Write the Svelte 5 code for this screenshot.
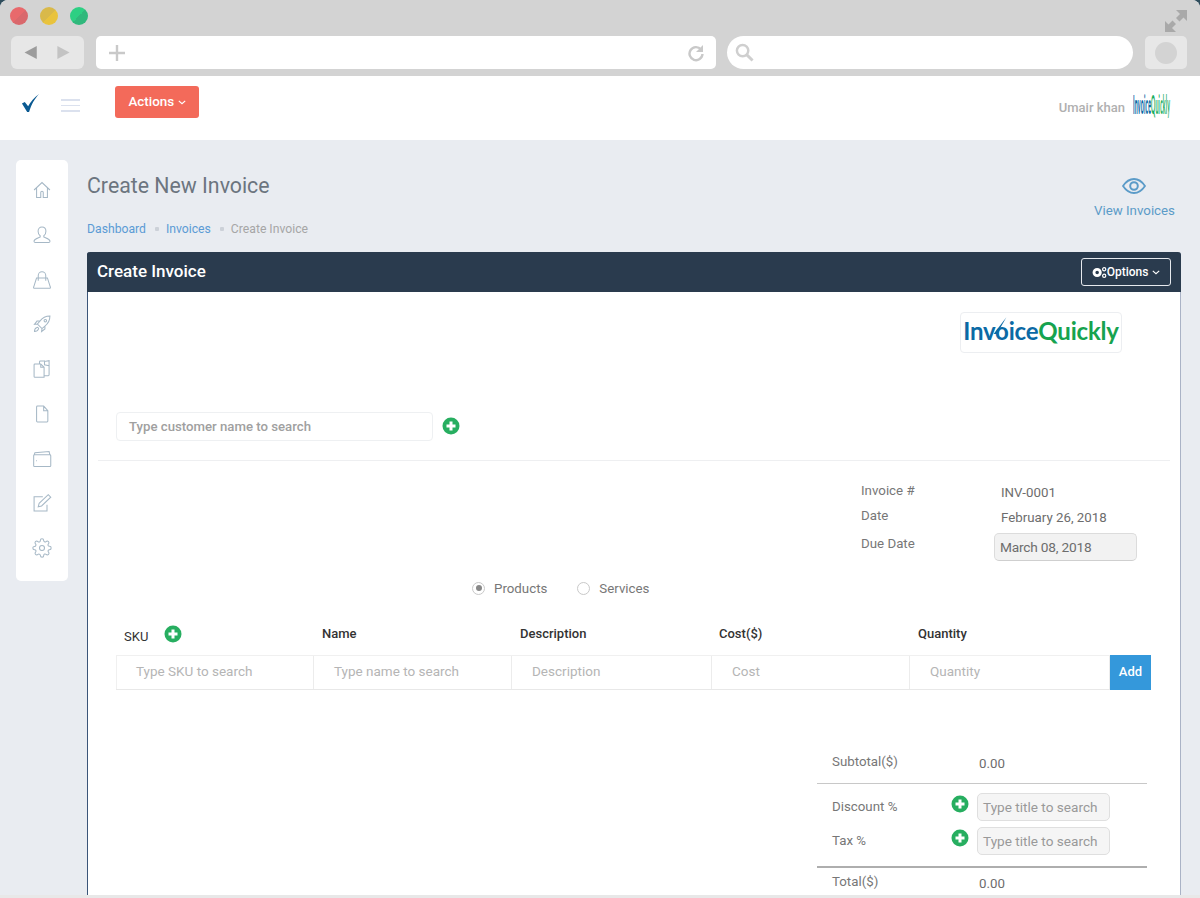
<script>
  const nav = [
    { label: 'Home', d: 'M2.5 12 12 3l9.5 9M5.5 10v11h5v-6a1.5 1.5 0 0 1 3 0v6h5V10' },
    { label: 'Profile', d: 'M12 2.5c-3 0-4.7 2.2-4.7 5 0 2.4 1 4.300 2.500 5.400v1.500c-1.800 1-6.800 2-7.300 4.600-.2 1 .3 2 1.500 2h16c1.200 0 1.700-1 1.500-2-.5-2.600-5.500-3.600-7.300-4.600v-1.500c1.500-1.100 2.500-3 2.500-5.400 0-2.800-1.700-5-4.700-5Z' },
    { label: 'Shop', d: 'M5.500 9.500 2 20.500a1 1 0 0 0 1 1.500h18a1 1 0 0 0 1-1.500l-3.500-11ZM7.500 13V6.500a4.500 4.500 0 0 1 9 0V13' },
    { label: 'Launch', d: 'M21.500 2.500c-5 0-9 2-12 6l-3 3.500 5.500 5.500 3.500-3c4-3 6-7 6-12ZM6.500 12l-3.500.5 3-4h3.500M12 17.500l-.5 3.500 4-3v-3.500M5.500 16.500c-1.500.5-2.500 2.500-2.500 4.500 2 0 4-1 4.500-2.500a1.400 1.400 0 0 0-2-2ZM16 6.500a1.500 1.500 0 1 0 .01 0' },
    { label: 'Copies', d: 'M3.500 6h7l4 4v12h-11a1 1 0 0 1-1-1V7a1 1 0 0 1 1-1ZM10.500 6v4h4M9 6V3.500a1 1 0 0 1 1-1h5l0 .5 5.500-1v17a1 1 0 0 1-1 1H14.500M15 2.500l0 4.500 5.500 1' },
    { label: 'File', d: 'M6.500 2.500h7.500l5 5.500v12.500a1 1 0 0 1-1 1H6.500a1 1 0 0 1-1-1V3.500a1 1 0 0 1 1-1ZM14 2.500V8h5' },
    { label: 'Folder', d: 'M2.500 7h19a1 1 0 0 1 1 1v12a1 1 0 0 1-1 1H3a1 1 0 0 1-1-1V8ZM2.500 7l1-2.500 17-1.500 1 4M5 14h1' },
    { label: 'Edit', d: 'M18 14v7.500H2.500V4.500H13M8.500 12.500 19.500 2l3 3-11 10.500-4 1Z' },
    { label: 'Settings', d: 'M19.4 15a1.65 1.65 0 0 0 .33 1.82l.06.06a2 2 0 0 1 0 2.83 2 2 0 0 1-2.83 0l-.06-.06a1.65 1.65 0 0 0-1.82-.33 1.65 1.65 0 0 0-1 1.51V21a2 2 0 0 1-2 2 2 2 0 0 1-2-2v-.09A1.65 1.65 0 0 0 9 19.4a1.65 1.65 0 0 0-1.82.33l-.06.06a2 2 0 0 1-2.83 0 2 2 0 0 1 0-2.83l.06-.06a1.65 1.65 0 0 0 .33-1.82 1.65 1.65 0 0 0-1.51-1H3a2 2 0 0 1-2-2 2 2 0 0 1 2-2h.09A1.65 1.65 0 0 0 4.600 9a1.65 1.65 0 0 0-.33-1.82l-.06-.06a2 2 0 0 1 0-2.83 2 2 0 0 1 2.83 0l.06.06a1.65 1.65 0 0 0 1.820.33H9a1.65 1.65 0 0 0 1-1.51V3a2 2 0 0 1 2-2 2 2 0 0 1 2 2v.09a1.65 1.65 0 0 0 1 1.51 1.65 1.65 0 0 0 1.82-.33l.06-.06a2 2 0 0 1 2.83 0 2 2 0 0 1 0 2.83l-.06.06a1.65 1.65 0 0 0-.33 1.82V9a1.65 1.65 0 0 0 1.51 1H21a2 2 0 0 1 2 2 2 2 0 0 1-2 2h-.09a1.65 1.65 0 0 0-1.51 1ZM15 12a3 3 0 1 1-6 0 3 3 0 0 1 6 0Z' }
  ];
  const columns = [
    { label: 'SKU', placeholder: 'Type SKU to search', width: 198 },
    { label: 'Name', placeholder: 'Type name to search', width: 198 },
    { label: 'Description', placeholder: 'Description', width: 200 },
    { label: 'Cost($)', placeholder: 'Cost', width: 198 },
    { label: 'Quantity', placeholder: 'Quantity', width: 200 }
  ];
</script>

{#snippet plus()}
  <svg class="plus" viewBox="0 0 18 18" aria-hidden="true">
    <circle cx="9" cy="9" r="8.500" fill="#27ae60" />
    <path d="M9 4.500v9M4.500 9h9" stroke="#fff" stroke-width="3" />
  </svg>
{/snippet}

<div class="page">
  <div class="chrome">
    <div class="lights">
      <span class="light red"></span>
      <span class="light yellow"></span>
      <span class="light green"></span>
      <svg class="expand" viewBox="0 0 22 22" aria-hidden="true">
        <path d="M11 0h11v11l-3.500-3.500-4 4-3.500-3.500 4-4ZM0 22V11l3.500 3.500 4-4 3.500 3.500-4 4L11 22Z" fill="#a9a9a9" />
      </svg>
    </div>
    <div class="toolbar">
      <div class="nav-buttons">
        <svg viewBox="0 0 50 16" aria-hidden="true">
          <path d="M0 8 13 1v14Z" fill="#9c9c9c" />
          <path d="M48 8 35 1v14Z" fill="#c3c3c3" />
        </svg>
      </div>
      <div class="address">
        <svg viewBox="0 0 16 16" aria-hidden="true">
          <path d="M8 0v16M0 8h16" stroke="#c9c9c9" stroke-width="2.400" />
        </svg>
        <svg class="reload" viewBox="0 0 18 18" aria-hidden="true">
          <path d="M14 5.500A6.500 6.500 0 1 0 15.500 10" fill="none" stroke="#c9c9c9" stroke-width="2.400" />
          <path d="M16 1v7h-7Z" fill="#c9c9c9" />
        </svg>
      </div>
      <div class="search">
        <svg viewBox="0 0 20 20" aria-hidden="true">
          <circle cx="8" cy="8" r="6" fill="none" stroke="#cfcfcf" stroke-width="2.600" />
          <path d="m12.500 12.500 6 6" stroke="#cfcfcf" stroke-width="3" />
        </svg>
      </div>
      <div class="profile-button"><span></span></div>
    </div>
  </div>

  <header class="app-header">
    <svg class="check" viewBox="0 0 20 20" aria-hidden="true">
      <path d="M1 10.500 4 9l3.500 4.500C10 8.500 14 4 19 .5 14.500 5.500 11 11 8.500 19.500H6.500Z" fill="#0b5a92" />
    </svg>
    <div class="burger"><span></span><span></span><span></span></div>
    <button class="actions">Actions <svg viewBox="0 0 10 6" aria-hidden="true"><path d="m1 1 4 3.500L9 1" fill="none" stroke="#fff" stroke-width="1.500" /></svg></button>
    <div class="user">
      <span class="uname">Umair khan</span>
      <div class="avatar"><span class="mini"><b>Invoice</b><i>Quickly</i></span></div>
    </div>
  </header>

  <div class="workspace">
    <aside class="sidebar">
      {#each nav as item}
        <svg viewBox="0 0 24 24" role="img" aria-label={item.label}><path d={item.d} /></svg>
      {/each}
    </aside>

    <main class="content">
      <div class="page-head">
        <div>
          <h1>Create New Invoice</h1>
          <nav class="crumbs">
            <a href="#a">Dashboard</a><span class="dot"></span><a href="#b">Invoices</a><span class="dot"></span><span>Create Invoice</span>
          </nav>
        </div>
        <a class="view" href="#c">
          <svg viewBox="0 0 24 16" aria-hidden="true">
            <path d="M1 8c3-4.500 7-7 11-7s8 2.500 11 7c-3 4.500-7 7-11 7S4 12.500 1 8Z" fill="none" stroke="#5b9bc8" stroke-width="1.800" />
            <circle cx="12" cy="8" r="3.800" fill="none" stroke="#5b9bc8" stroke-width="2" />
          </svg>
          View Invoices
        </a>
      </div>

      <section class="panel">
        <div class="panel-head">
          <h2>Create Invoice</h2>
          <button class="options">
            <svg viewBox="0 0 16 13" aria-hidden="true">
              <circle cx="5.500" cy="6.500" r="3.400" fill="none" stroke="#fff" stroke-width="3" />
              <circle cx="13" cy="3" r="1.700" fill="none" stroke="#fff" stroke-width="1.300" />
              <circle cx="13" cy="10" r="1.700" fill="none" stroke="#fff" stroke-width="1.300" />
            </svg>Options
            <svg class="chev" viewBox="0 0 10 6" aria-hidden="true"><path d="m1 1 4 3.500L9 1" fill="none" stroke="#fff" stroke-width="1.400" /></svg>
          </button>
        </div>

        <div class="panel-body">
          <div class="logo-row">
            <div class="logo">
              <span class="inv">Invoice</span><span class="qk">Quickly</span>
              <svg class="tick" viewBox="0 0 20 24" aria-hidden="true"><path d="M2 22 18 1 6 22Z" fill="#0b6aa5" /></svg>
            </div>
          </div>

          <div class="customer">
            <div class="field customer-field">Type customer name to search</div>
            {@render plus()}
          </div>
          <hr />

          <div class="meta">
            <div class="meta-row r1"><span>Invoice #</span><span class="val">INV-0001</span></div>
            <div class="meta-row r2"><span>Date</span><span class="val">February 26, 2018</span></div>
            <div class="meta-row r3"><span>Due Date</span><span class="date">March 08, 2018</span></div>
          </div>

          <div class="radios">
            <span class="radio on"></span><span class="rlabel first">Products</span>
            <span class="radio"></span><span class="rlabel">Services</span>
          </div>

          <div class="item-table">
            <div class="heads">
              {#each columns as c, i}
                <div class="head" style="width:{c.width}px">
                  {#if i === 0}
                    <span class="sku">{c.label}</span>{@render plus()}
                  {:else}
                    {c.label}
                  {/if}
                </div>
              {/each}
            </div>
            <div class="cells">
              {#each columns as c}
                <div class="cell" style="width:{c.width}px">{c.placeholder}</div>
              {/each}
              <button class="add">Add</button>
            </div>
          </div>

          <div class="totals">
            <div class="t-row sub"><span class="t-label">Subtotal($)</span><span class="t-val">0.00</span></div>
            <div class="t-inputs">
              <div class="t-row"><span class="t-label">Discount %</span>{@render plus()}<span class="t-field">Type title to search</span></div>
              <div class="t-row"><span class="t-label">Tax %</span>{@render plus()}<span class="t-field">Type title to search</span></div>
            </div>
            <div class="t-row total"><span class="t-label">Total($)</span><span class="t-val">0.00</span></div>
          </div>
        </div>
      </section>
    </main>
  </div>
  <div class="strip"></div>
</div>

<style>
  :global(body) {
    margin: 0;
    background: #2f4d5c;
    font-family: Roboto, "Liberation Sans", sans-serif;
  }
  .page {
    height: 898px;
    width: 1200px;
    overflow: hidden;
    display: flex;
    flex-direction: column;
    background: #e9ecf1;
    border-radius: 8px 8px 0 0;
  }
  .chrome {
    height: 76px;
    flex: none;
    background: #d3d3d3;
    box-sizing: border-box;
    padding: 7px 11px 0;
  }
  .lights {
    display: flex;
    gap: 12px;
    height: 29px;
    align-items: flex-start;
    margin-left: -1px;
  }
  .light { width: 18px; height: 18px; border-radius: 50%; }
  .red { background: linear-gradient(135deg, #e8696c 50%, #d9686c 50%); }
  .yellow { background: linear-gradient(135deg, #d9b94a 50%, #e9c33d 50%); }
  .green { background: linear-gradient(135deg, #2dcf83 50%, #30b87c 50%); }
  .expand { width: 22px; height: 22px; margin-left: auto; margin-top: 3px; margin-right: 2px; }
  .toolbar { display: flex; height: 33px; }
  .nav-buttons {
    width: 73px;
    background: #e7e7e7;
    border-radius: 6px;
    display: flex;
    align-items: center;
    justify-content: center;
  }
  .nav-buttons svg { width: 48px; height: 15px; }
  .address {
    width: 620px;
    margin-left: 12px;
    background: #fff;
    border-radius: 5px;
    display: flex;
    align-items: center;
    justify-content: space-between;
    padding: 0 11px 0 13px;
    box-sizing: border-box;
  }
  .address svg { width: 16px; height: 16px; }
  .address .reload { width: 18px; height: 18px; }
  .search {
    width: 406px;
    margin-left: 11px;
    background: #fff;
    border-radius: 17px;
    display: flex;
    align-items: center;
    padding-left: 8px;
    box-sizing: border-box;
  }
  .search svg { width: 19px; height: 19px; }
  .profile-button {
    width: 42px;
    margin-left: 12px;
    background: #e7e7e7;
    border-radius: 5px;
    display: flex;
    align-items: center;
    justify-content: center;
  }
  .profile-button span { width: 22px; height: 22px; border-radius: 50%; background: #d3d3d3; }

  .app-header {
    height: 64px;
    flex: none;
    background: #fff;
    display: flex;
    align-items: flex-start;
    position: relative;
  }
  .check { width: 19px; height: 20px; margin: 17px 0 0 21px; }
  .burger { margin: 23px 0 0 21px; width: 19px; display: flex; flex-direction: column; gap: 4px; }
  .burger span { height: 1.500px; background: #dbe1ee; }
  .actions {
    margin: 10px 0 0 35px;
    width: 84px;
    height: 32px;
    border: 0;
    border-radius: 3px;
    background: #f36a5a;
    color: #fff;
    font: 500 13.400px Roboto, sans-serif;
    padding: 0 0 2px;
    white-space: nowrap;
  }
  .actions svg { width: 8px; height: 5px; vertical-align: 1px; }
  .user {
    margin-left: auto;
    margin-right: 28px;
    display: flex;
    align-items: center;
    height: 30px;
    margin-top: 13px;
    font-size: 13px;
    font-weight: 500;
    color: #b0b0b0;
  }
  .uname { margin-top: 6px; }
  .avatar { width: 39px; height: 28px; margin-left: 8px; position: relative; }
  .mini {
    position: absolute;
    left: 0;
    top: 0;
    font: 700 26px/28px "Lato", sans-serif;
    transform: scaleX(.2);
    transform-origin: left center;
    white-space: nowrap;
    letter-spacing: 1px;
  }
  .mini b { color: #0b6aa5; }
  .mini i { color: #1bae5f; font-style: normal; font-weight: 700; }

  .workspace { flex: 1; min-height: 0; display: flex; align-items: flex-start; padding: 20px 19px 0 16px; }
  .sidebar {
    width: 52px;
    height: 421px;
    flex: none;
    background: #fff;
    border-radius: 5px;
    box-sizing: border-box;
    padding-top: 20px;
    display: flex;
    flex-direction: column;
    align-items: center;
    gap: 24.750px;
  }
  .sidebar svg { width: 20px; height: 20px; fill: none; stroke: #a6b8c6; stroke-width: 1.250; flex: none; }

  .content { flex: 1; margin-left: 19px; min-width: 0; }
  .page-head { display: flex; justify-content: space-between; height: 92px; }
  h1 { margin: 14px 0 0; font-size: 21.300px; line-height: 24px; font-weight: 400; color: #6c757f; }
  .crumbs { display: flex; align-items: center; margin-top: 24px; font-size: 12.200px; line-height: 14px; color: #a6a6a6; }
  .crumbs a { color: #5b9bd5; text-decoration: none; }
  .dot { width: 4px; height: 4px; background: #ccd1d8; margin: 0 7px 0 9px; border-radius: 1px; }
  .view {
    margin: 18px 6px 0 0;
    display: flex;
    flex-direction: column;
    align-items: center;
    font-size: 13.300px;
    color: #5b9bc8;
    text-decoration: none;
    gap: 9px;
  }
  .view svg { width: 24px; height: 16px; }

  .panel { border: 1px solid #3b5579; border-right-color: #aab3c6; border-top: 0; background: #fff; height: 700px; border-radius: 3px 3px 0 0; }
  .panel-head {
    height: 40px;
    margin: 0 -1px;
    background: #2a3b4e;
    border-radius: 3px 3px 0 0;
    display: flex;
    align-items: center;
    justify-content: space-between;
    padding: 0 10px;
  }
  h2 { margin: -3px 0 0; color: #fff; font-size: 17px; font-weight: 500; }
  .options {
    width: 90px;
    height: 28px;
    border: 1px solid #e6e9ee;
    border-radius: 3px;
    background: transparent;
    color: #fff;
    font: 500 12px Roboto, sans-serif;
    padding: 0;
    display: flex;
    align-items: center;
    justify-content: center;
    gap: 0;
  }
  .options svg { width: 15px; height: 13px; }
  .options .chev { width: 8px; height: 5px; margin-left: 4px; }

  .panel-body { font-size: 13.300px; color: #777; }
  .logo-row { height: 120px; display: flex; justify-content: flex-end; padding: 20px 58px 0 0; box-sizing: border-box; }
  .logo {
    width: 162px;
    height: 41px;
    box-sizing: border-box;
    border: 1px solid #eceef1;
    border-radius: 4px;
    display: flex;
    align-items: center;
    justify-content: center;
    font: 700 24px/36px "Lato", sans-serif;
    letter-spacing: -.2px;
    padding-bottom: 4px;
    position: relative;
  }
  .inv { color: #0b6aa5; }
  .qk { color: #16a34f; }
  .tick { position: absolute; left: 31px; top: 3px; width: 16px; height: 20px; }

  .customer { display: flex; align-items: center; height: 29px; margin-left: 28px; }
  .customer-field {
    width: 317px;
    height: 29px;
    box-sizing: border-box;
    border: 1px solid #eef0f2;
    border-radius: 4px;
    line-height: 27px;
    padding-left: 12px;
    color: #a0a0a0;
    font-weight: 500;
    font-size: 13.200px;
  }
  .plus { width: 18px; height: 18px; flex: none; }
  .customer .plus { margin: -2px 0 0 9px; }
  hr { border: 0; border-top: 1px solid #eeeff1; margin: 19px 10px 0; }

  .meta { margin-left: 773px; height: 117px; padding-top: 22px; box-sizing: border-box; }
  .meta-row { display: grid; grid-template-columns: 133px 1fr; align-items: start; line-height: 16px; }
  .meta-row .val { padding-left: 7px; color: #6d6d6d; margin-top: 2px; }
  .r2 { margin-top: 7px; }
  .r3 { margin-top: 10px; }
  .date {
    width: 143px;
    height: 28px;
    box-sizing: border-box;
    background: #f2f2f2;
    border: 1px solid #dcdcdc;
    border-bottom-color: #cfcfcf;
    border-radius: 5px;
    line-height: 27px;
    padding-left: 5px;
    color: #6d6d6d;
    margin-top: -3px;
    font-size: 13.700px;
    letter-spacing: -.2px;
  }

  .radios { display: flex; align-items: center; height: 20px; margin-left: 384px; }
  .radio { width: 13px; height: 13px; box-sizing: border-box; border: 1px solid #c9c9c9; border-radius: 50%; position: relative; flex: none; }
  .radio.on::after { content: ""; position: absolute; inset: 2.500px; border-radius: 50%; background: #888; }
  .rlabel { margin-left: 9px; color: #777; }
  .rlabel.first { margin-right: 30px; }

  .item-table { margin-left: 28px; margin-top: 27px; }
  .heads { display: flex; height: 30px; }
  .head { box-sizing: border-box; padding-left: 8px; color: #333; font-weight: 500; line-height: 16px; display: flex; align-items: flex-start; padding-top: 1px; font-size: 13px; }
  .head:nth-child(4) { padding-left: 7px; }
  .sku { margin-top: 3px; font-weight: 400; }
  .head .plus { margin-left: 16px; margin-top: -1px; }
  .cells { display: flex; height: 35px; border-top: 1px solid #f0f0f0; border-bottom: 1px solid #e8e8e8; box-sizing: border-box; width: 1035px; box-shadow: inset 1px 0 0 #f0f0f0; }
  .cell { box-sizing: border-box; border-right: 1px solid #ececec; padding-left: 20px; line-height: 31px; color: #b5b5b5; font-size: 13.500px; }
  .add { width: 41px; height: 35px; margin-top: -1px; flex: none; background: #3498db; border: 0; color: #fff; font: 500 13px Roboto, sans-serif; padding: 0 0 2px; margin-left: auto; }

  .totals { margin-left: 729px; width: 330px; margin-top: 52px; }
  .t-row { display: flex; align-items: center; }
  .t-label { width: 120px; padding-left: 15px; box-sizing: border-box; flex: none; }
  .sub .t-label, .t-inputs .t-label { margin-top: -2px; }
  .t-val { padding-left: 42px; color: #6d6d6d; }
  .t-row.sub { height: 41px; border-bottom: 1px solid #c8c8c8; }
  .t-row.sub .t-val { margin-top: 1px; }
  .t-row.total .t-val { margin-top: 5px; }
  .t-inputs { height: 84px; padding-top: 9px; box-sizing: border-box; border-bottom: 2px solid #aeaeae; display: flex; flex-direction: column; gap: 6px; }
  .t-inputs .t-row { height: 28px; }
  .t-inputs .plus { margin-left: 14px; margin-top: -6px; }
  .t-field {
    width: 133px;
    height: 28px;
    margin-left: 8px;
    box-sizing: border-box;
    background: #f5f5f5;
    border: 1px solid #dfdfdf;
    border-radius: 5px;
    line-height: 26px;
    padding-left: 5px;
    font-size: 13.600px;
    color: #999;
  }
  .t-row.total { height: 26px; }
  .strip { height: 3px; flex: none; background: #e8e8e8; margin-top: -3px; position: relative; }
</style>
